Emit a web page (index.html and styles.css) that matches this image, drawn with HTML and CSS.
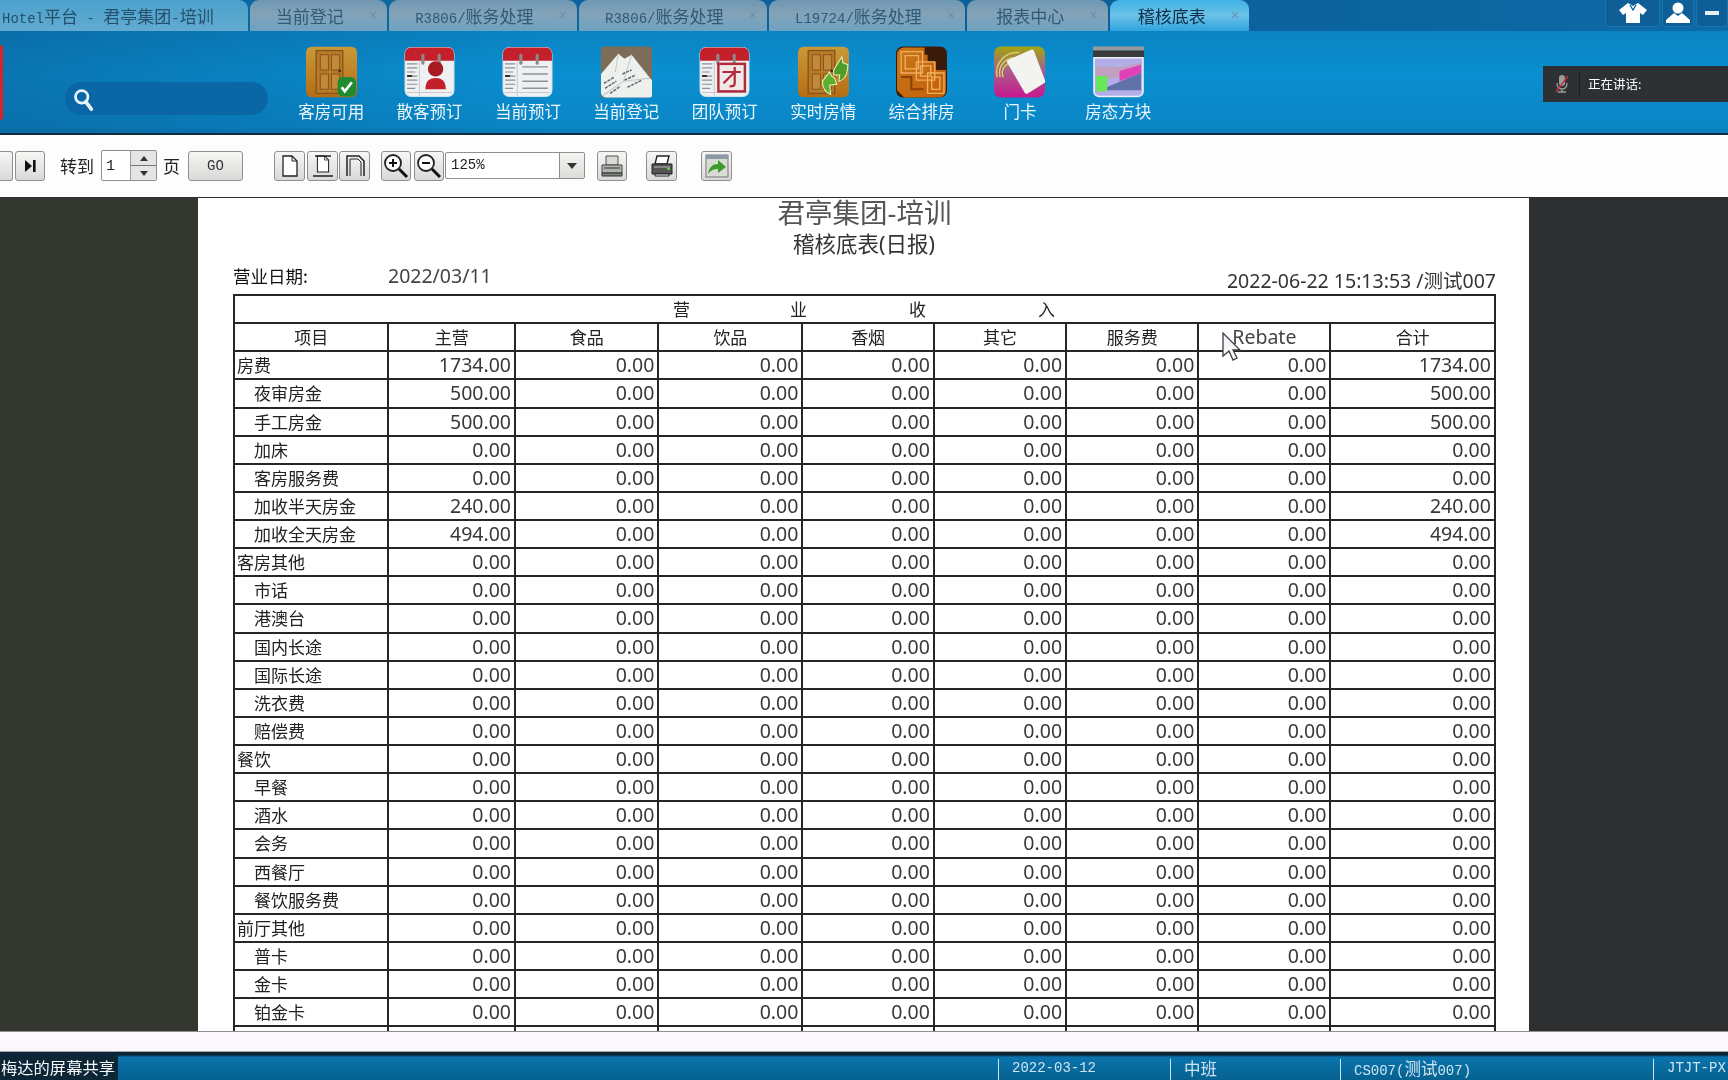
FILE: index.html
```html
<!DOCTYPE html>
<html lang="zh-CN">
<head>
<meta charset="utf-8">
<title>稽核底表</title>
<link rel="stylesheet" href="styles.css">
</head>
<body>
<svg class="defs" width="0" height="0" aria-hidden="true">
  <defs>
    <linearGradient id="wood" x1="0" y1="0" x2="0" y2="1"><stop offset="0" stop-color="#c99a3a"/><stop offset="1" stop-color="#b56d14"/></linearGradient>
    <linearGradient id="maze" x1="0" y1="0" x2="1" y2="1"><stop offset="0" stop-color="#c8761a"/><stop offset="1" stop-color="#c25f08"/></linearGradient>
    <linearGradient id="cardbg" x1="0" y1="0" x2="0" y2="1"><stop offset="0" stop-color="#a3a60f"/><stop offset=".45" stop-color="#a8608a"/><stop offset="1" stop-color="#c8188f"/></linearGradient>
    <symbol id="cal" viewBox="0 0 50 50">
      <rect x="1" y="1" width="48" height="48" rx="6" fill="#eef0f2" stroke="#cfe3ee"/>
      <path d="M1 14V7a6 6 0 0 1 6-6h36a6 6 0 0 1 6 6v7z" fill="#c4202c"/>
      <rect x="17" y="7" width="3" height="11" rx="1.5" fill="#8a8a8a"/><rect x="33" y="7" width="3" height="11" rx="1.5" fill="#8a8a8a"/>
      <path d="M3 17h10M3 21h10M3 25h8M3 29h10M3 33h10M3 37h10M3 41h8" stroke="#8a9096" stroke-width="1.2"/>
      <path d="M3 29h5" stroke="#333" stroke-width="2"/>
      <path d="M15 15v34" stroke="#c6c9cc"/>
      <path d="M3 45h44" stroke="#c6c9cc"/>
    </symbol>
    <symbol id="door" viewBox="0 0 50 50">
      <rect x="0" y="0" width="50" height="50" rx="6" fill="url(#wood)"/>
      <rect x="10" y="4" width="26" height="42" fill="#b77a28" stroke="#8b5518" stroke-width="1.4"/>
      <path d="M14 8h8v15h-8zM25 8h8v15h-8zM14 27h8v15h-8zM25 27h8v15h-8z" fill="#c08a3a" stroke="#8b5518"/>
      <circle cx="33" cy="24" r="1.4" fill="#4d2d08"/>
    </symbol>
    <symbol id="doc" viewBox="0 0 20 24">
      <path d="M3 2h9l5 5v15H3z" fill="#fff" stroke="#222" stroke-width="1.3"/><path d="M12 2v5h5" fill="none" stroke="#222" stroke-width="1"/>
    </symbol>
  </defs>
</svg>

<div class="app">
  <header class="tabbar">
    <div class="tab tab-home"><span>Hotel<span class="cjk">平台</span> - <span class="cjk">君亭集团</span>-<span class="cjk">培训</span></span></div>
    <div class="tab"><span class="cjk">当前登记</span><i class="close">×</i></div>
    <div class="tab"><span>R3806/<span class="cjk">账务处理</span></span><i class="close">×</i></div>
    <div class="tab"><span>R3806/<span class="cjk">账务处理</span></span><i class="close">×</i></div>
    <div class="tab"><span>L19724/<span class="cjk">账务处理</span></span><i class="close">×</i></div>
    <div class="tab tab-report"><span class="cjk">报表中心</span><i class="close">×</i></div>
    <div class="tab tab-active"><span class="cjk">稽核底表</span><i class="close">×</i></div>
    <div class="winctl">
      <button class="winbtn winbtn-skin"><svg width="30" height="22" viewBox="0 0 30 22"><path d="M10 1l5 3 5-3 9 7-4 5-3-2v10H8V11l-3 2-4-5z" fill="#fff"/><path d="M12 3l3 5 3-5" fill="none" stroke="#0d5f96" stroke-width="1.4"/></svg></button>
      <button class="winbtn winbtn-user"><svg width="26" height="22" viewBox="0 0 26 22"><circle cx="13" cy="6" r="5.5" fill="#fff"/><path d="M9 11l4 3 4-3 8 7v3H1v-3z" fill="#fff"/></svg></button>
      <button class="winbtn winbtn-min"><span class="minus"></span></button>
    </div>
  </header>

  <nav class="nav">
    <div class="edge"></div>
    <div class="search">
      <svg width="22" height="24" viewBox="0 0 24 26"><circle cx="9.5" cy="9.5" r="6.8" fill="none" stroke="#e6f2fa" stroke-width="3"/><path d="M14 15l6 8" stroke="#e6f2fa" stroke-width="4" stroke-linecap="round"/></svg>
    </div>
    <div class="nav-items">
      <a class="nav-item">
        <svg class="nav-icon" viewBox="0 0 50 50"><use href="#door"/><rect x="31" y="30" width="18" height="19" rx="5" fill="#1f8a2e"/><path d="M35 40l3 4 7-9" fill="none" stroke="#fff" stroke-width="2.6"/></svg>
        <span>客房可用</span>
      </a>
      <a class="nav-item">
        <svg class="nav-icon" viewBox="0 0 50 50"><use href="#cal"/><circle cx="31" cy="22" r="7.5" fill="#a81a22"/><path d="M21 42c0-8 4-11 10-11s10 3 10 11z" fill="#c4202c"/></svg>
        <span>散客预订</span>
      </a>
      <a class="nav-item">
        <svg class="nav-icon" viewBox="0 0 50 50"><use href="#cal"/><path d="M20 20h25M20 27h25M20 34h25M20 41h25" stroke="#8f9398" stroke-width="1.4"/></svg>
        <span>当前预订</span>
      </a>
      <a class="nav-item">
        <svg class="nav-icon" viewBox="0 0 50 50"><rect width="50" height="50" rx="2" fill="#7d6c58"/><path d="M0 27L17 7l6 5 7-4 18 23 2 2v15a2 2 0 0 1-2 2H5a5 5 0 0 1-5-5z" fill="#eef0ee"/><path d="M30 8L22 34M17 7l-3 18M2 48l20-14 26-3" fill="none" stroke="#c4c8c4" stroke-width="1"/><path d="M3 36l10-6M4 41l11-7M9 46l10-7M21 27l9-4M23 33l11-5M26 40l14-7" stroke="#666a6f" stroke-width="1.5" stroke-dasharray="3 1"/></svg>
        <span>当前登记</span>
      </a>
      <a class="nav-item">
        <svg class="nav-icon" viewBox="0 0 50 50"><use href="#cal"/><rect x="19" y="17" width="26" height="27" fill="#f2e8e8" stroke="#b02a3a" stroke-width="2.4"/><path d="M23 25h18M35 20v16c0 3-2 3-5 3M35 25L24 36" fill="none" stroke="#b02a3a" stroke-width="2.2"/></svg>
        <span>团队预订</span>
      </a>
      <a class="nav-item">
        <svg class="nav-icon" viewBox="0 0 50 50"><use href="#door"/><path d="M24 34l7-9 2 4 3 2 2 6-7 1 1 9c-5-2-8-7-8-13z" fill="#5caf2e" stroke="#e9f2c0"/><path d="M35 23l8-13 1 6 5 2-1 7c-1 5-4 8-8 9l1-6-6 0z" fill="#4d9c26" stroke="#e9f2c0"/></svg>
        <span>实时房情</span>
      </a>
      <a class="nav-item">
        <svg class="nav-icon" viewBox="0 0 50 50"><rect width="50" height="50" rx="7" fill="#3a1a08"/><path d="M1 8a7 7 0 0 1 7-7h20v7h3v7h8v8h10v20a7 7 0 0 1-7 7H8l-7-7z" fill="url(#maze)"/><path d="M5 5h21v21H5zM9 9h13v13H9zM20 15h18v18H20zM24 19h10v10H24zM31 26h16v20H31zM35 30h8v12h-8z" fill="none" stroke="#f0b060" stroke-width="1.3"/><path d="M5 30h10v12h12" fill="none" stroke="#8a4208" stroke-width="2"/></svg>
        <span>综合排房</span>
      </a>
      <a class="nav-item">
        <svg class="nav-icon" viewBox="0 0 50 50"><rect width="50" height="50" rx="7" fill="url(#cardbg)"/><path d="M3 30a20 20 0 0 1 22-24M6 30a15 15 0 0 1 16-19M9 30a10 10 0 0 1 10-14" fill="none" stroke="#d6d65a" stroke-width="1.4"/><path d="M14 13L37 3a2 2 0 0 1 2 1l11 29a2 2 0 0 1-1 3l-16 10a2 2 0 0 1-3-1L13 16a2 2 0 0 1 1-3z" fill="#f3f3ef"/></svg>
        <span>门卡</span>
      </a>
      <a class="nav-item">
        <svg class="nav-icon" viewBox="0 0 50 50"><rect x="0" y="0" width="50" height="4" fill="#9a9a9a"/><rect x="0" y="4" width="50" height="7" fill="#3a3a3a"/><path d="M1 11h48v33a5 5 0 0 1-5 5H6a5 5 0 0 1-5-5z" fill="#b4aee8" stroke="#e8f2f6" stroke-width="1.6"/><path d="M3 20h24l20-4v10L3 34z" fill="#c4a0c0"/><path d="M26 24l21-6v8l-21 8z" fill="#e040b8"/><path d="M13 40l34-14v17H13z" fill="#6070a8"/><rect x="3" y="29" width="11" height="15" fill="#66e85a"/></svg>
        <span>房态方块</span>
      </a>
    </div>
    <aside class="voice">
      <svg class="voice-mic" width="16" height="20" viewBox="0 0 16 20"><rect x="5" y="1" width="6" height="11" rx="3" fill="#9a9c9e"/><path d="M3 9c0 4 2 6 5 6s5-2 5-6M8 15v3M4 18h8" fill="none" stroke="#9a9c9e" stroke-width="1.3"/><path d="M2 18L14 2" stroke="#c8323c" stroke-width="1.4"/></svg>
      <span class="voice-sep"></span>
      <span>正在讲话:</span>
    </aside>
  </nav>

  <div class="toolbar">
    <button class="tbtn tbtn-cut"></button>
    <button class="tbtn t-last"><svg width="14" height="14" viewBox="0 0 14 14"><path d="M2 1l7 6-7 6z" fill="#111"/><rect x="10" y="1" width="2.6" height="12" fill="#111"/></svg></button>
    <span class="tlabel t-goto">转到</span>
    <div class="spin">
      <span class="spin-val">1</span>
      <span class="spin-arrows"><i class="up"></i><i class="down"></i></span>
    </div>
    <span class="tlabel t-page">页</span>
    <button class="tbtn t-go">GO</button>
    <button class="tbtn t-d1"><svg width="20" height="24" viewBox="0 0 20 24"><use href="#doc"/></svg></button>
    <button class="tbtn t-d"><svg width="22" height="24" viewBox="0 0 22 24"><svg x="3" width="16" height="20" viewBox="0 0 20 24"><use href="#doc"/></svg><path d="M1 22h20M3 2h16" stroke="#222" stroke-width="1.5"/></svg></button>
    <button class="tbtn t-d"><svg width="22" height="24" viewBox="0 0 22 24"><path d="M3 22V2h12l5 5v15" fill="none" stroke="#222" stroke-width="1.5"/><path d="M6 22V5h8l3 3v14" fill="none" stroke="#222"/></svg></button>
    <button class="tbtn t-z1"><svg width="26" height="26" viewBox="0 0 26 26"><circle cx="10" cy="10" r="8" fill="#fff" stroke="#222" stroke-width="1.8"/><path d="M6 10h8M10 6v8" stroke="#111" stroke-width="2"/><path d="M16 16l8 8" stroke="#111" stroke-width="3"/></svg></button>
    <button class="tbtn t-z2"><svg width="26" height="26" viewBox="0 0 26 26"><circle cx="10" cy="10" r="8" fill="#fff" stroke="#222" stroke-width="1.8"/><path d="M6 10h8" stroke="#111" stroke-width="2"/><path d="M16 16l8 8" stroke="#111" stroke-width="3"/></svg></button>
    <div class="zoomsel">
      <span class="zoomsel-val">125%</span>
      <span class="zoomsel-btn"><i></i></span>
    </div>
    <button class="tbtn t-p1"><svg width="26" height="24" viewBox="0 0 26 24"><path d="M7 2h12v9H7z" fill="#d8dad6" stroke="#555"/><path d="M3 11h20v8H3z" fill="#b0b4ae" stroke="#444"/><path d="M5 14h16M3 19h20v3H3z" fill="#7e817e" stroke="#333"/></svg></button>
    <button class="tbtn t-p2"><svg width="26" height="24" viewBox="0 0 26 24"><path d="M8 2h12l-2 8H6z" fill="#fff" stroke="#222" stroke-width="1.4"/><path d="M3 10h20v10H3z" fill="#555" stroke="#222"/><path d="M5 13h16" stroke="#bbb"/><path d="M6 20h14v2H6z" fill="#fff" stroke="#222"/><rect x="18" y="14" width="3" height="2" fill="#6c3"/></svg></button>
    <button class="tbtn t-p3"><svg width="26" height="26" viewBox="0 0 26 26"><rect x="2" y="2" width="22" height="22" fill="#d8dcd4" stroke="#777"/><rect x="2" y="2" width="22" height="4" fill="#8a9aa6"/><path d="M4 21c1-7 5-10 10-10V7l8 7-8 6v-4c-4 0-7 1-10 5z" fill="#3f9a2c"/></svg></button>
  </div>

  <main class="report">
    <section class="paper">
      <h1 class="r-title">君亭集团-培训</h1>
      <h2 class="r-sub">稽核底表(日报)</h2>
      <div class="r-meta">
        <span class="r-daylabel">营业日期:</span>
        <span class="r-date">2022/03/11</span>
        <span class="r-stamp">2022-06-22 15:13:53 /测试007</span>
      </div>
      <table class="grid">
        <colgroup><col class="c1"><col class="c2"><col class="c3"><col class="c4"><col class="c5"><col class="c6"><col class="c7"><col class="c8"><col class="c9"></colgroup>
        <thead>
          <tr><th colspan="9"><div class="spread"><span>营</span><span class="sp2">业</span><span class="sp3">收</span><span class="sp4">入</span></div></th></tr>
          <tr><th>项目</th><th>主营</th><th>食品</th><th>饮品</th><th>香烟</th><th>其它</th><th>服务费</th><th class="latin">Rebate</th><th>合计</th></tr>
        </thead>
        <tbody>
          <tr><td class="top">房费</td><td>1734.00</td><td>0.00</td><td>0.00</td><td>0.00</td><td>0.00</td><td>0.00</td><td>0.00</td><td>1734.00</td></tr>
          <tr><td class="sub">夜审房金</td><td>500.00</td><td>0.00</td><td>0.00</td><td>0.00</td><td>0.00</td><td>0.00</td><td>0.00</td><td>500.00</td></tr>
          <tr><td class="sub">手工房金</td><td>500.00</td><td>0.00</td><td>0.00</td><td>0.00</td><td>0.00</td><td>0.00</td><td>0.00</td><td>500.00</td></tr>
          <tr><td class="sub">加床</td><td>0.00</td><td>0.00</td><td>0.00</td><td>0.00</td><td>0.00</td><td>0.00</td><td>0.00</td><td>0.00</td></tr>
          <tr><td class="sub">客房服务费</td><td>0.00</td><td>0.00</td><td>0.00</td><td>0.00</td><td>0.00</td><td>0.00</td><td>0.00</td><td>0.00</td></tr>
          <tr><td class="sub">加收半天房金</td><td>240.00</td><td>0.00</td><td>0.00</td><td>0.00</td><td>0.00</td><td>0.00</td><td>0.00</td><td>240.00</td></tr>
          <tr><td class="sub">加收全天房金</td><td>494.00</td><td>0.00</td><td>0.00</td><td>0.00</td><td>0.00</td><td>0.00</td><td>0.00</td><td>494.00</td></tr>
          <tr><td class="top">客房其他</td><td>0.00</td><td>0.00</td><td>0.00</td><td>0.00</td><td>0.00</td><td>0.00</td><td>0.00</td><td>0.00</td></tr>
          <tr><td class="sub">市话</td><td>0.00</td><td>0.00</td><td>0.00</td><td>0.00</td><td>0.00</td><td>0.00</td><td>0.00</td><td>0.00</td></tr>
          <tr><td class="sub">港澳台</td><td>0.00</td><td>0.00</td><td>0.00</td><td>0.00</td><td>0.00</td><td>0.00</td><td>0.00</td><td>0.00</td></tr>
          <tr><td class="sub">国内长途</td><td>0.00</td><td>0.00</td><td>0.00</td><td>0.00</td><td>0.00</td><td>0.00</td><td>0.00</td><td>0.00</td></tr>
          <tr><td class="sub">国际长途</td><td>0.00</td><td>0.00</td><td>0.00</td><td>0.00</td><td>0.00</td><td>0.00</td><td>0.00</td><td>0.00</td></tr>
          <tr><td class="sub">洗衣费</td><td>0.00</td><td>0.00</td><td>0.00</td><td>0.00</td><td>0.00</td><td>0.00</td><td>0.00</td><td>0.00</td></tr>
          <tr><td class="sub">赔偿费</td><td>0.00</td><td>0.00</td><td>0.00</td><td>0.00</td><td>0.00</td><td>0.00</td><td>0.00</td><td>0.00</td></tr>
          <tr><td class="top">餐饮</td><td>0.00</td><td>0.00</td><td>0.00</td><td>0.00</td><td>0.00</td><td>0.00</td><td>0.00</td><td>0.00</td></tr>
          <tr><td class="sub">早餐</td><td>0.00</td><td>0.00</td><td>0.00</td><td>0.00</td><td>0.00</td><td>0.00</td><td>0.00</td><td>0.00</td></tr>
          <tr><td class="sub">酒水</td><td>0.00</td><td>0.00</td><td>0.00</td><td>0.00</td><td>0.00</td><td>0.00</td><td>0.00</td><td>0.00</td></tr>
          <tr><td class="sub">会务</td><td>0.00</td><td>0.00</td><td>0.00</td><td>0.00</td><td>0.00</td><td>0.00</td><td>0.00</td><td>0.00</td></tr>
          <tr><td class="sub">西餐厅</td><td>0.00</td><td>0.00</td><td>0.00</td><td>0.00</td><td>0.00</td><td>0.00</td><td>0.00</td><td>0.00</td></tr>
          <tr><td class="sub">餐饮服务费</td><td>0.00</td><td>0.00</td><td>0.00</td><td>0.00</td><td>0.00</td><td>0.00</td><td>0.00</td><td>0.00</td></tr>
          <tr><td class="top">前厅其他</td><td>0.00</td><td>0.00</td><td>0.00</td><td>0.00</td><td>0.00</td><td>0.00</td><td>0.00</td><td>0.00</td></tr>
          <tr><td class="sub">普卡</td><td>0.00</td><td>0.00</td><td>0.00</td><td>0.00</td><td>0.00</td><td>0.00</td><td>0.00</td><td>0.00</td></tr>
          <tr><td class="sub">金卡</td><td>0.00</td><td>0.00</td><td>0.00</td><td>0.00</td><td>0.00</td><td>0.00</td><td>0.00</td><td>0.00</td></tr>
          <tr><td class="sub">铂金卡</td><td>0.00</td><td>0.00</td><td>0.00</td><td>0.00</td><td>0.00</td><td>0.00</td><td>0.00</td><td>0.00</td></tr>
          <tr><td></td><td></td><td></td><td></td><td></td><td></td><td></td><td></td><td></td></tr>
        </tbody>
      </table>
    </section>
  </main>

  <div class="strip"></div>

  <footer class="status">
    <div class="share">梅达的屏幕共享</div>
    <div></div>
    <div class="st">2022-03-12</div>
    <div class="st"><span class="cjk">中班</span></div>
    <div class="st">CS007(<span class="cjk">测试</span>007)</div>
    <div class="st">JTJT-PX</div>
  </footer>

  <svg class="cursor" width="20" height="30" viewBox="0 0 20 30"><path d="M1 1v23l6-5 4 9 4-2-4-8h7z" fill="#f4f6f8" stroke="#3a3f44" stroke-width="1.3"/></svg>
</div>
</body>
</html>
```

FILE: styles.css
```css
* { box-sizing: border-box; }
html, body { margin: 0; padding: 0; }
body { width: 1728px; height: 1080px; overflow: hidden; background: #fff; font-family: "Noto Sans", "Noto Sans CJK SC", sans-serif; }
.defs { position: absolute; }
.app { position: relative; width: 1728px; height: 1080px; display: flex; flex-direction: column; overflow: hidden; filter: blur(0.45px); }
.cjk { font-family: "Noto Sans CJK SC", sans-serif; font-size: 17px; }

/* tab bar */
.tabbar { height: 31px; flex: none; display: flex; gap: 2px; background: linear-gradient(90deg, #0c6aa4, #0b5f98 60%, #0d6aa6); font-family: "Liberation Mono", "Noto Sans CJK SC", monospace; font-size: 14px; color: #2f5a78; }
.tab { height: 31px; display: flex; align-items: center; padding: 0 10.5px 0 26px; border-radius: 9px 9px 0 0; background: linear-gradient(180deg, #6f97b2 0%, #83a3b8 45%, #6ea2c2 100%); white-space: nowrap; }
.tab-home { padding: 0 34px 0 2px; border-radius: 0 9px 0 0; background: linear-gradient(180deg, #4aa2cc 0%, #62abd0 100%); color: #264f6c; }
.tab-report { padding-left: 29px; }
.tab-active { padding-left: 28px; background: linear-gradient(180deg, #3fb2e4 0%, #6cc2e8 50%, #2fa3de 100%); color: #10304a; }
.close { font-style: normal; font-size: 14px; line-height: 1; width: 8px; margin-left: 25px; color: #6a90aa; }
.winctl { margin-left: auto; display: flex; gap: 2px; }
.winbtn { height: 27px; padding: 0; background: #0e5f97; border: 1px solid #1d74ab; border-top: 0; border-radius: 0 0 4px 4px; display: flex; align-items: center; justify-content: center; }
.winbtn-skin { width: 55px; }
.winbtn-user { width: 32px; }
.winbtn-min { width: 32px; }
.minus { display: block; width: 14px; height: 4px; background: #e8f0f6; }

/* main nav */
.nav { position: relative; flex: none; height: 104px; display: flex; align-items: flex-start; background: linear-gradient(90deg, rgba(8, 60, 110, .3), rgba(8, 60, 110, 0) 32%), linear-gradient(180deg, #0a83c2 0%, #0a8fd0 40%, #0a86c6 94%, #0a7fbc 97%); border-bottom: 2px solid #0d2a3e; }
.edge { width: 3px; height: 75px; margin-top: 14px; background: #d8232a; border-radius: 0 3px 3px 0; }
.search { width: 203px; height: 33px; margin: 51px 0 0 62px; padding: 6px 0 0 8px; border-radius: 17px; background: #0a66a4; }
.nav-items { display: flex; margin-left: 14px; }
.nav-item { width: 98.4px; margin-top: 15px; display: flex; flex-direction: column; align-items: center; color: #eaf6fc; font-size: 16.5px; line-height: 20px; font-family: "Noto Sans CJK SC", sans-serif; }
.nav-icon { width: 51px; height: 52px; margin-bottom: 3px; display: block; }
.voice { position: absolute; top: 35px; right: 0; width: 185px; height: 36px; display: flex; align-items: center; background: #2e3134; color: #fff; font-size: 12.5px; line-height: 34px; font-family: "Noto Sans CJK SC", sans-serif; padding-left: 11px; }
.voice-sep { width: 1px; height: 24px; background: #1c1d1f; margin: 0 8px 0 9px; }

/* report toolbar */
.toolbar { flex: none; height: 63px; display: flex; align-items: center; background: #fdfdfd; border-bottom: 1px solid #2c2c2c; padding-bottom: 1px; }
.tbtn { width: 31px; height: 30px; padding: 0; flex: none; display: flex; align-items: center; justify-content: center; background: linear-gradient(180deg, #f6f6f4, #d9dad7); border: 1px solid #8f908e; border-radius: 3px; color: #333; }
.tbtn-cut { width: 13px; border-left: 0; border-radius: 0 3px 3px 0; margin-right: 2px; }
.t-last { width: 30px; }
.tlabel { font-size: 17px; color: #222; font-family: "Noto Sans CJK SC", sans-serif; }
.t-goto { width: 34px; margin-left: 15px; }
.spin { width: 56px; height: 31px; margin-left: 7px; display: flex; background: #fff; border: 1px solid #8f908e; border-radius: 2px; }
.spin-val { flex: 1; padding: 7px 0 0 4px; font-size: 15px; font-family: "Liberation Mono", monospace; color: #222; }
.spin-arrows { width: 26px; display: flex; flex-direction: column; border-left: 1px solid #9a9a98; }
.spin-arrows i { flex: 1; display: flex; align-items: center; justify-content: center; background: #e4e5e2; }
.spin-arrows .up { border-bottom: 1px solid #777; }
.spin-arrows i::after { content: ""; border: 4px solid transparent; }
.spin-arrows .up::after { border-bottom: 5px solid #333; border-top: 0; }
.spin-arrows .down::after { border-top: 5px solid #333; border-bottom: 0; }
.t-page { width: 17px; margin-left: 6px; }
.t-go { width: 55px; margin-left: 8px; font: 14px "Liberation Mono", monospace; }
.t-d1 { margin-left: 31px; margin-right: 2px; }
.t-d { margin-right: 1px; }
.t-z1 { width: 30px; margin-left: 10px; margin-right: 3px; }
.t-z2 { width: 30px; margin-right: 1px; }
.zoomsel { width: 140px; height: 27px; display: flex; background: #fff; border: 1px solid #8f908e; border-radius: 2px; }
.zoomsel-val { flex: 1; padding: 4px 0 0 5px; font: 14px "Liberation Mono", monospace; color: #222; }
.zoomsel-btn { width: 25px; display: flex; align-items: center; justify-content: center; background: linear-gradient(180deg, #f4f4f2, #dcdcd9); border-left: 1px solid #8f908e; }
.zoomsel-btn i { border: 5px solid transparent; border-top: 6px solid #333; border-bottom: 0; }
.t-p1 { width: 30px; margin-left: 12px; }
.t-p2 { margin-left: 19px; }
.t-p3 { margin-left: 24px; }

/* report page */
.report { flex: none; height: 834px; padding-left: 198px; overflow: hidden; background: linear-gradient(90deg, #343630 50%, #2e2f31 50%); border-bottom: 1px solid #8e8e8e; }
.paper { width: 1331px; height: 833px; padding: 0 33px 0 35px; background: #fff; overflow: hidden; color: #222; }
.r-title { margin: 0; height: 30px; line-height: 30px; font-size: 27.5px; font-weight: 400; text-align: center; color: #555; }
.r-sub { margin: 3px 0 0; height: 26px; line-height: 26px; font-size: 21.5px; font-weight: 400; text-align: center; color: #333; padding-right: 1px; }
.r-meta { height: 37px; display: flex; align-items: center; }
.r-daylabel { width: 155px; font-size: 17.5px; color: #111; font-family: "Noto Sans CJK SC", sans-serif; }
.r-date { font-size: 19.5px; color: #444; }
.r-stamp { margin-left: auto; font-size: 19.5px; color: #333; padding-top: 7px; }
.grid { width: 1261px; table-layout: fixed; border-collapse: collapse; border: 2px solid #222; }
.c1 { width: 154.4px; } .c2 { width: 126.6px; } .c3 { width: 143.4px; } .c4 { width: 144px; } .c5 { width: 131.5px; } .c6 { width: 132.2px; } .c7 { width: 132.3px; } .c8 { width: 132px; } .c9 { width: 164.5px; }
.grid th, .grid td { height: 28.125px; padding: 0; border: 2px solid #262626; overflow: hidden; white-space: nowrap; }
.grid th { font-size: 17px; font-weight: 400; color: #222; font-family: "Noto Sans CJK SC", sans-serif; line-height: 24px; }
.grid th.latin { font: 400 19.5px/24px "Noto Sans", sans-serif; color: #444; }
.spread { display: flex; padding-left: 438px; }
.sp2 { margin-left: 100px; }
.sp3 { margin-left: 102px; }
.sp4 { margin-left: 112px; }
.grid td { text-align: right; padding-right: 3px; font-size: 19.5px; line-height: 24px; color: #383838; }
.grid td.top, .grid td.sub { text-align: left; font-size: 17px; color: #222; font-family: "Noto Sans CJK SC", sans-serif; }
.grid td.top { padding-left: 2px; }
.grid td.sub { padding-left: 19px; }

/* bottom */
.strip { flex: none; height: 20px; background: #fbf7fa; border-bottom: 1px solid #a6a6a6; }
.status { flex: none; height: 28px; display: grid; grid-template-columns: 118px 880px 172px 170px 313px 1fr; align-items: stretch; background: linear-gradient(180deg, #0c2538 0, #0c2538 3px, #0b74ae 5px, #05618f 100%); color: #cfe4f0; font: 14px "Liberation Mono", monospace; }
.share { background: #0d2636; margin-top: 3px; padding-left: 1px; color: #f4f8fb; font: 16.3px/25px "Noto Sans CJK SC", sans-serif; white-space: nowrap; }
.st { margin: 7px 0 2px; padding: 0 0 0 13px; border-left: 1px solid #cfe4f0; line-height: 19px; white-space: nowrap; }
.st .cjk { font-size: 16.5px; }

/* pointer captured in the screen share */
.cursor { position: absolute; left: 1222px; top: 332px; }
```
